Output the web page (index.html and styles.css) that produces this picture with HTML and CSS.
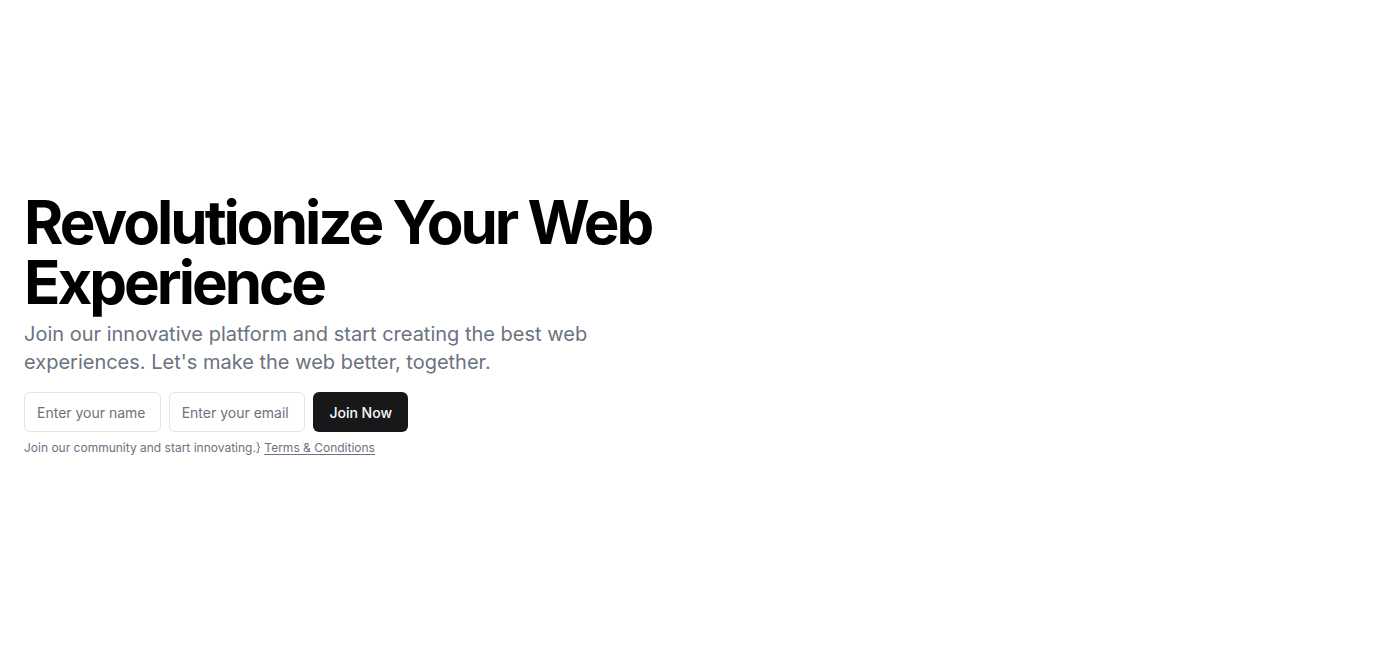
FILE: index.html
```html
<!DOCTYPE html>
<html lang="en">
<head>
<meta charset="utf-8">
<title>Revolutionize Your Web Experience</title>
<link rel="stylesheet" href="styles.css">
</head>
<body>
<section class="hero">
  <div class="content">
    <div class="intro">
      <h1 class="title">Revolutionize Your Web Experience</h1>
      <p class="lead">Join our innovative platform and start creating the best web experiences. Let's make the web better, together.</p>
    </div>
    <div class="signup">
      <form class="form">
        <input class="field" type="text" placeholder="Enter your name">
        <input class="field" type="email" placeholder="Enter your email">
        <button class="btn" type="submit">Join Now</button>
      </form>
      <p class="note">Join our community and start innovating.} <a class="link" href="#">Terms &amp; Conditions</a></p>
    </div>
  </div>
</section>
</body>
</html>
```
FILE: styles.css
```css
* { box-sizing: border-box; }
html, body { margin: 0; padding: 0; background: #fff; }
body { font-family: Inter, "Noto Sans", sans-serif; color: #09090b; }
.hero {
  min-height: 100vh;
  display: flex;
  align-items: center;
  padding: 0 24px;
}
.content {
  display: flex;
  flex-direction: column;
  gap: 16px;
}
.intro { display: flex; flex-direction: column; gap: 8px; }
.title {
  margin: 0;
  font-size: 60px;
  line-height: 60px;
  font-weight: 700;
  letter-spacing: -0.05em;
  color: #000;
  max-width: 700px;
}
.lead {
  margin: 0;
  max-width: 600px;
  font-size: 20px;
  line-height: 28px;
  color: #6b7280;
}
.signup { width: 384px; display: flex; flex-direction: column; gap: 8px; }
.form { display: flex; gap: 8px; margin: 0; }
.field {
  flex: 1 1 0;
  min-width: 0;
  height: 40px;
  padding: 8px 12px;
  border: 1px solid #e4e4e7;
  border-radius: 6px;
  font-family: inherit;
  font-size: 14px;
  color: #09090b;
  background: #fff;
  outline: none;
}
.field::placeholder { color: #71717a; }
.btn {
  height: 40px;
  padding: 0 16px;
  border: 0;
  border-radius: 6px;
  background: #18181b;
  color: #fafafa;
  font-family: inherit;
  font-size: 14px;
  font-weight: 500;
}
.note {
  margin: 0;
  font-size: 12px;
  line-height: 16px;
  color: #6b7280;
}
.link {
  color: inherit;
  text-decoration: underline;
  text-underline-offset: 2px;
}
```
